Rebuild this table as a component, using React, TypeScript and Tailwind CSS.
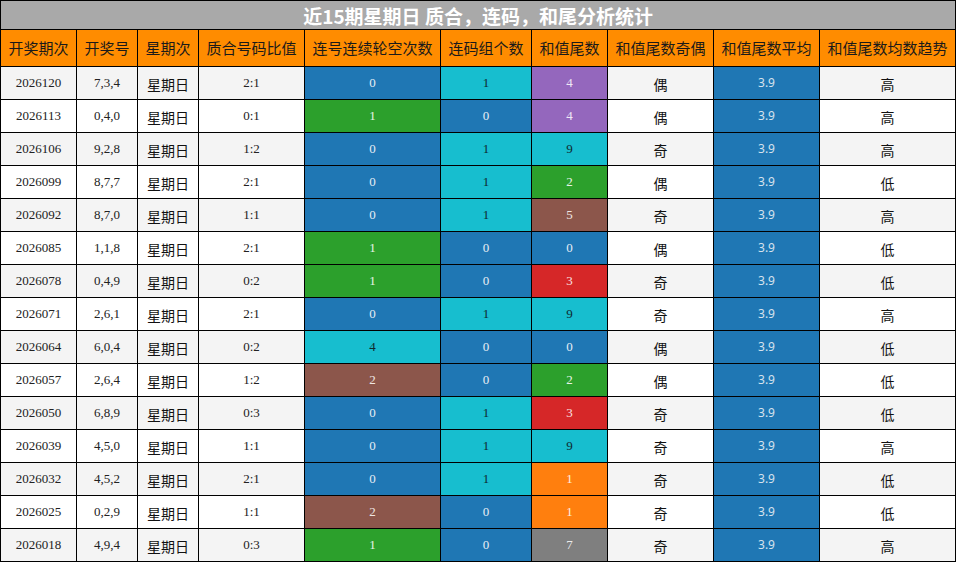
const BLUE = "bg-[#1f77b4] text-[#e8eef5]";
const ORANGE = "bg-[#ff7f0e] text-[#fdeee0]";
const GREEN = "bg-[#2ca02c] text-[#e6f3e6]";
const RED = "bg-[#d62728] text-[#f8e2e2]";
const PURPLE = "bg-[#9467bd] text-[#efe8f5]";
const BROWN = "bg-[#8c564b] text-[#f0e6e3]";
const GRAY = "bg-[#7f7f7f] text-[#ececec]";
const CYAN = "bg-[#17becf] text-[#0f2a2e]";

type Row = {
  issue: string;
  nums: string;
  ratio: string;
  gap: [string, string];
  group: [string, string];
  tail: [string, string];
  parity: string;
  trend: string;
};

const ROWS: Row[] = [
  { issue: "2026120", nums: "7,3,4", ratio: "2:1", gap: ["0", BLUE], group: ["1", CYAN], tail: ["4", PURPLE], parity: "偶", trend: "高" },
  { issue: "2026113", nums: "0,4,0", ratio: "0:1", gap: ["1", GREEN], group: ["0", BLUE], tail: ["4", PURPLE], parity: "偶", trend: "高" },
  { issue: "2026106", nums: "9,2,8", ratio: "1:2", gap: ["0", BLUE], group: ["1", CYAN], tail: ["9", CYAN], parity: "奇", trend: "高" },
  { issue: "2026099", nums: "8,7,7", ratio: "2:1", gap: ["0", BLUE], group: ["1", CYAN], tail: ["2", GREEN], parity: "偶", trend: "低" },
  { issue: "2026092", nums: "8,7,0", ratio: "1:1", gap: ["0", BLUE], group: ["1", CYAN], tail: ["5", BROWN], parity: "奇", trend: "高" },
  { issue: "2026085", nums: "1,1,8", ratio: "2:1", gap: ["1", GREEN], group: ["0", BLUE], tail: ["0", BLUE], parity: "偶", trend: "低" },
  { issue: "2026078", nums: "0,4,9", ratio: "0:2", gap: ["1", GREEN], group: ["0", BLUE], tail: ["3", RED], parity: "奇", trend: "低" },
  { issue: "2026071", nums: "2,6,1", ratio: "2:1", gap: ["0", BLUE], group: ["1", CYAN], tail: ["9", CYAN], parity: "奇", trend: "高" },
  { issue: "2026064", nums: "6,0,4", ratio: "0:2", gap: ["4", CYAN], group: ["0", BLUE], tail: ["0", BLUE], parity: "偶", trend: "低" },
  { issue: "2026057", nums: "2,6,4", ratio: "1:2", gap: ["2", BROWN], group: ["0", BLUE], tail: ["2", GREEN], parity: "偶", trend: "低" },
  { issue: "2026050", nums: "6,8,9", ratio: "0:3", gap: ["0", BLUE], group: ["1", CYAN], tail: ["3", RED], parity: "奇", trend: "低" },
  { issue: "2026039", nums: "4,5,0", ratio: "1:1", gap: ["0", BLUE], group: ["1", CYAN], tail: ["9", CYAN], parity: "奇", trend: "高" },
  { issue: "2026032", nums: "4,5,2", ratio: "2:1", gap: ["0", BLUE], group: ["1", CYAN], tail: ["1", ORANGE], parity: "奇", trend: "低" },
  { issue: "2026025", nums: "0,2,9", ratio: "1:1", gap: ["2", BROWN], group: ["0", BLUE], tail: ["1", ORANGE], parity: "奇", trend: "低" },
  { issue: "2026018", nums: "4,9,4", ratio: "0:3", gap: ["1", GREEN], group: ["0", BLUE], tail: ["7", GRAY], parity: "奇", trend: "高" },
];

const HEADERS = [
  "开奖期次",
  "开奖号",
  "星期次",
  "质合号码比值",
  "连号连续轮空次数",
  "连码组个数",
  "和值尾数",
  "和值尾数奇偶",
  "和值尾数平均",
  "和值尾数均数趋势",
];

const WIDTHS = [
  "w-[76px]",
  "w-[61px]",
  "w-[61px]",
  "w-[106px]",
  "w-[136px]",
  "w-[91px]",
  "w-[76px]",
  "w-[106px]",
  "w-[106px]",
  "w-[136px]",
];

const CJK = "font-['Noto_Sans_CJK_SC',sans-serif]";
const SERIF = "font-['Liberation_Serif','Noto_Sans_CJK_SC',serif]";
const TD = "h-[33px] border border-black p-0 text-center align-middle";

export default function App() {
  return (
    <div className="h-[562px] w-[956px] overflow-hidden bg-white">
      <table className="w-[956px] table-fixed border-collapse">
        <colgroup>
          {WIDTHS.map((w, i) => (
            <col key={i} className={w} />
          ))}
        </colgroup>
        <thead>
          <tr>
            <th
              colSpan={10}
              className={`h-[29px] border border-black bg-[#a9a9a9] p-0 text-center text-[19px] font-bold leading-none text-white ${CJK}`}
            >
              近15期星期日 质合，连码，和尾分析统计
            </th>
          </tr>
          <tr>
            {HEADERS.map((h) => (
              <th
                key={h}
                className={`h-[37px] border border-black bg-[#ff8c00] p-0 text-center text-[15px] font-normal text-[#1a1a1a] ${CJK}`}
              >
                {h}
              </th>
            ))}
          </tr>
        </thead>
        <tbody>
          {ROWS.map((r, i) => {
            const bg = i % 2 === 0 ? "bg-[#f4f4f4]" : "bg-white";
            return (
              <tr key={r.issue} className={bg}>
                <td className={`${TD} ${SERIF} text-[13px] text-[#222]`}>{r.issue}</td>
                <td className={`${TD} ${SERIF} text-[13px] text-[#222]`}>{r.nums}</td>
                <td className={`${TD} ${CJK} pt-[3px] text-[14px] text-[#111]`}>星期日</td>
                <td className={`${TD} ${SERIF} text-[13px] text-[#222]`}>{r.ratio}</td>
                <td className={`${TD} ${SERIF} text-[13px] ${r.gap[1]}`}>{r.gap[0]}</td>
                <td className={`${TD} ${SERIF} text-[13px] ${r.group[1]}`}>{r.group[0]}</td>
                <td className={`${TD} ${SERIF} text-[13px] ${r.tail[1]}`}>{r.tail[0]}</td>
                <td className={`${TD} ${CJK} pt-[3px] text-[14px] text-[#111]`}>{r.parity}</td>
                <td className={`${TD} bg-[#1f77b4] font-['Noto_Sans',sans-serif] text-[12px] text-[#d6e2ee]`}>
                  3.9
                </td>
                <td className={`${TD} ${CJK} pt-[3px] text-[14px] text-[#111]`}>{r.trend}</td>
              </tr>
            );
          })}
        </tbody>
      </table>
    </div>
  );
}
